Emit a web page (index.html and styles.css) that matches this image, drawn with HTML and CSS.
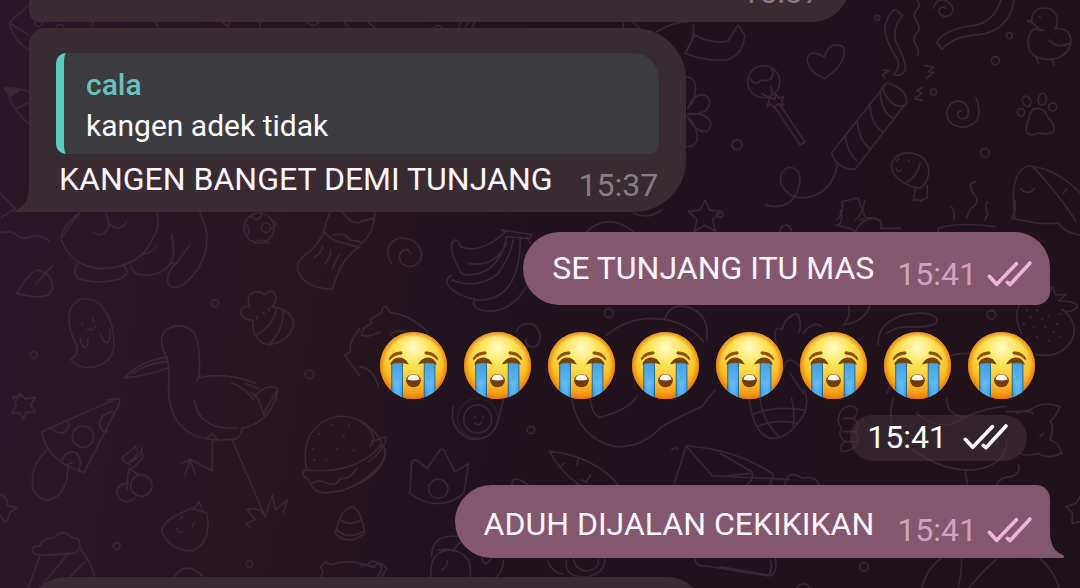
FILE: index.html
```
<!DOCTYPE html>
<html lang="id">
<head>
    <meta charset="UTF-8" />
    <meta name="viewport" content="width=device-width, initial-scale=1.0" />
    <title>Chat</title>
    <link rel="stylesheet" href="styles.css">
</head>
<body>

    <!-- Shared symbols -->
    <svg class="sprites" width="0" height="0" aria-hidden="true">
        <defs>
            <radialGradient id="skin" cx="50%" cy="24%" r="78%">
                <stop offset="0" stop-color="#fffbc9" />
                <stop offset=".3" stop-color="#fde55a" />
                <stop offset=".68" stop-color="#fbc02b" />
                <stop offset="1" stop-color="#ee8206" />
            </radialGradient>
            <radialGradient id="rim">
                <stop offset=".84" stop-color="#f08a08" stop-opacity="0" />
                <stop offset="1" stop-color="#e87806" stop-opacity=".85" />
            </radialGradient>
            <linearGradient id="tear" x1="0" y1="0" x2="0" y2="1">
                <stop offset="0" stop-color="#4a9fd9" />
                <stop offset=".5" stop-color="#5ab4ee" />
                <stop offset="1" stop-color="#269ae6" />
            </linearGradient>
            <clipPath id="face"><circle cx="100" cy="100" r="100" /></clipPath>
        </defs>
        <symbol id="sob" viewBox="0 0 200 200">
            <circle cx="100" cy="100" r="100" fill="url(#skin)" />
            <circle cx="100" cy="100" r="100" fill="url(#rim)" />
            <g clip-path="url(#face)">
                <path d="M35 92h32v110H35zM132 92h32v110h-32z" fill="url(#tear)" stroke="#28698f" stroke-width="3" />
                <path d="M43 150q8-12 16 0v50H43zM140 150q8-12 16 0v50h-16z" fill="#79c4f2" opacity=".45" />
            </g>
            <path d="M30 98Q38 76 57 76T86 97Q70 92 57 92T30 98zM113 97Q124 76 143 76T170 98Q157 92 143 92T113 97z" fill="#74420b" />
            <path d="M26 80Q38 56 65 58Q70 64 64 67Q43 68 29 84zM174 80Q162 56 135 58Q130 64 136 67Q157 68 171 84z" fill="#8b5208" />
            <ellipse cx="100" cy="145" rx="22" ry="20" fill="#743c0c" />
            <path d="M82 142Q84 127 100 127T118 142Q100 148 82 142z" fill="#fff8ef" />
        </symbol>
        <symbol id="ticks" viewBox="0 0 135 78">
            <path d="M7 46l22 24L88 8M61 64l8 7L129 6" fill="none" stroke="currentColor" stroke-width="11" stroke-linecap="round" stroke-linejoin="round" />
        </symbol>
    </svg>

    <!-- Wallpaper doodles -->
    <svg class="wallpaper" viewBox="0 0 1080 588" preserveAspectRatio="xMidYMid slice" aria-hidden="true">
        <g transform="scale(.33333)">
            <path d="M90 12L28 68Q40 125 88 150M28 70L88 105M20 265Q30 325 88 372M20 265Q50 262 88 275M50 325l38-18M0 580l45 45L5 652" />
            <path d="M12 264l50 3-30 22z" class="solid" />
            <circle cx="116" cy="68" r="12" /><circle cx="180" cy="82" r="9" />
            <path d="M272 80l8-12M465 68l10 14M670 68l14 14 4-16M780 68v14M925 68q12 18 30 0M1032 68l14 12M1105 68l20 16M1300 84q15-15 25 0M1375 84l8-16M1395 84l8-16M1415 84l8-16" />
        </g>
        <g transform="translate(360) scale(.33333)">
            <path d="M790 68v12M820 68l18 16M890 95q50-30 95-30M975 160q60 25 125 20 50-15 54-75l-20-30-30 48q-50 10-100-18zM1000 75q5 45-25 85" />
            <path d="M978 230q35 5 27 50-5 30-22 45Q1000 280 1035 285q25 15 5 45-20 15-58 12Q1040 335 1053 370q-5 35-35 20-20-10-36-40Q1015 380 1012 420q-8 22-34 20M820 640q45 20 85-10" />
            <path d="M1035 600l14 30 36 4-27 24 8 36-31-18-32 18 8-36-26-24 36-4z" />
        </g>
        <g transform="translate(720) scale(.33333)">
            <path d="M525 28l23 18q-30 35-22 75 35 70 30 90-15 22-36 12 25-20 10-50-48-70-30-110 5-20 25-35zM590 0q15 15 0 30t0 35 0 35-2 35 4 33M640 25q10-35 40-22 30 20 12 42-20 12-34-6-3-18 12-18l8 4" />
            <path d="M843 0q-25 75-95 78-70 10-98 48l16 22q35-40 110-44 90-10 106-104" />
            <path d="M936 70Q930 30 968 24q42-2 44 40 0 18-8 22 50-5 49 42-14 52-72 50-56-5-57-50 2-42 32-44-15-12-18-14zM936 62l-14 1 14 5M958 50l3 3M950 88q12 5 23 2M987 120q25 30 66 8M948 170l8 22M998 180l4 16" />
            <path d="M315 236q-48-18-54-58 6-33 52-7 16-52 57-30 14 45-55 95z" />
            <circle cx="131" cy="245" r="48" /><path d="M90 235q18 28 32 5 22 5 32-5 10-20 0-28M125 280l20 12M153 260l4 25M145 292l20 6 2-16 12 13 12-5-6 15 6 10-18-2-10 10-8-10-14 6 6-15zM162 318l78 116 15-8-77-115" />
            <path d="M500 249q60 15 60 58L405 508q-55 0-70-50zM490 255q-5 25 22 50t48 5M480 272q5 70 38 80M449 314q5 60 38 80M412 362q5 60 36 82M376 410q5 45 34 72M353 492q-15 85-90 100-50 10-78-35-12-38 18-54 35-5 37 40-12 90-102 73" />
            <path d="M490 210l18 2-20 12 8 12M615 196l25 5-14 14 14 2-20 18M608 262l-18 10 16 8-22 16 24 6" />
            <circle cx="826" cy="182" r="12" /><circle cx="868" cy="107" r="9" /><circle cx="641" cy="276" r="9" /><circle cx="795" cy="458" r="13" /><circle cx="51" cy="434" r="15" /><circle cx="472" cy="53" r="7" /><circle cx="0" cy="643" r="9" />
            <path d="M768 292q30 80-37 90-55-5-50-50 12-35 45-27 30 20 14 48-24 10-28-10 2-10 12-10" />
            <path d="M950 325q25 0 32 25 30 30 16 47-15 8-40 2-40 15-40-13 5-22 10-36 5-25 22-25z" /><ellipse cx="920" cy="304" rx="12" ry="16" transform="rotate(-25 920 304)" /><ellipse cx="967" cy="298" rx="12" ry="18" transform="rotate(10 967 298)" /><circle cx="998" cy="321" r="12" /><circle cx="903" cy="337" r="11" />
            <path d="M555 550q-45-25-40-60 15-32 50-32 60 5 62 60-5 30-24 45-20 5-48-13zM555 550q40-22 45-62M528 505q5 15 16 5M530 482l8-6M565 480l2 4M586 562l-6 40 12-3 10 5 8-6 12-4 0-38" />
            <path d="M885 658q-20-145 40-160 80 5 155 80M938 500q85 90 130 165M902 566q20 22 42 0M1030 580l10-14M768 545q-30 5-5 40 20 20-10 40l-15 30M693 620q14 10 8 40M803 605q-12 15 0 35l-8 20" />
            <path d="M350 660q24-25 16-55l20-5 28-6 6 15 14 40M420 660q25-15 60 0" />
        </g>
        <g transform="translate(0 200) scale(.33333)">
            <path d="M0 98q40-8 55 12 25 10 50-4 30 5 45 20M240 36q-65 55-55 85 30 80 120 85 120-5 155-95 22-30 10-75M190 108q20-35 52-72M318 40q20 45-10 62-18 5-28-5M326 70q30 30 54-5M235 190q-22 25 0 45 50 20 125 2 35-20 10-40M392 195q5 35 60 30 90-15 62-122M420 165q40-5 50-30M510 190h20q15-25 40-55M530 188q-35 35-25 65 20 25 60-12 70-70 52-160l-18-45" />
            <path d="M50 280q40-65 62-70 50 12 44 60-10 35-106 10zM108 252l50-55" />
            <path d="M212 478q30-15 15-48-30-60-15-105 30-50 85-15 50 50 44 135-10 50-72 58-40 0-57-25zM245 370l5 5M278 355l4 12M262 385q14 12 25-6M242 415q0 22 12 28 12-4 10-28M303 404q5 25 20 24 10-10 6-38" />
            <circle cx="645" cy="310" r="11" /><circle cx="101" cy="464" r="10" /><circle cx="928" cy="523" r="13" />
            <circle cx="777" cy="84" r="45" /><circle cx="798" cy="83" r="14" /><path d="M740 75q15 20 0 32M755 50q20 20 30-8M765 130q15-20 40 0M815 60l15 10-15 15" />
            <path d="M992 36q-15 25-20 60-20 40-45 60-45 30-32 58 20 50 102 54 20-60 30-75 20-30 50-52M975 98q15 20 50 30t55 15M1000 105q35-10 50 15l30 4M1028 36q20 35 52 32M968 140q-5 20-25 32M992 150q0 20-15 40M1018 165q-15 20-20 42" />
            <path d="M758 360q-38 0-35-30 8-14 25-10-12-40 22-45 18 0 22 10 25-25 36 5 0 20-12 30 60 10 65 50-10 55-75 64-50-10-48-74zM828 322q0 50-60 84M850 328q0 70-45 106M770 350l2 8M788 336l6 8M806 325l3 6" />
            <path d="M500 472q-28-50-5-80 50-35 90 10 18 40 12 132 70-20 170 15M500 472q-70 5-128 62 60-5 132-30M500 472q8 20 6 50v78M400 520q40-30 100-35M600 525q-8 10-8 18M695 548q40 15 65 50M735 550q25 10 40 15M765 590q30-40 68-25l-4 35M50 600l5-20 18 16 25-2M320 600l35-4M1080 385q-35 40-28 70l-18 10q20 30 45 62" />
        </g>
        <g transform="translate(0 390) scale(.33333)">
            <path d="M62 10l14 17 30-5-14 24 14 20-28 2-7 20-14-20-22 1 14-23-10-26 20 2z" />
            <path d="M352 25q12 0 4 20L252 248Q140 215 125 125zM155 115q15 18 40 12 15-15 10-30M338 65q-35 5-40 35 5 30 25 25M185 210q20-35 45-20 18 20 8 48M204 240q-5-25 14-20" /><circle cx="249" cy="140" r="32" /><path d="M140 180q-55 50-40 120 30 50 75 15 30-30 27-75" />
            <circle cx="424" cy="287" r="32" /><path d="M385 280q-35 0-35 30 15 40 54 15M380 300q5-60 8-65l30 22M390 225l-22-14q0-15 20-25 15-10 16-18l10 15q-5 20-28 35 35-10 40-45l2 30-20 22-20 15" />
            <path d="M505 0q5 120 105 145 60 10 100 0 15-10 16-30 90-20 107-115M583 32q15 90 130 82M755 8q25 15 35 65l40-70M620 145l15-15 15 15M637 148v94l-70-36M545 220l25-10-15 45M570 210l16 42M697 150l98 230q-10-30-55-22l25 30-28 15 15 10M795 380l22-65 10 45 36-32-14 40" />
            <path d="M575 355q-100 40-88 75 30 55 90 52 60-25 43-112zM580 358l18-22 12 30M548 380l-10 8M582 398l-6 12M530 415q5 15 16 10" />
            <path d="M1054 350q30 5 40 80-50 40-88 0 15-70 48-80zM1022 390q25 20 62 0M1010 420q35 30 78 5M920 240q-20-100 50-145 60-35 125 5 50 40 50 65-80 90-225 75zM920 240q-20 5-6 22 15 5 20 25 20 30 70 18 70-5 145-90 20-45-10-50M935 280q20-15 45 0 30 10 40-15 30 5 50-30M954 130l3 3M995 102l3 3M1045 105l3 3M938 175l3 3M1010 175l3 3M1060 180l3 3M978 210l3 3M942 208l3 3M1030 138l3 3" />
            <path d="M120 495q-25 0-22-22 12-8 22-4 5-25 40-25 25-30 55-2 30 0 24 32-10 20-30 16-50 5-89 5zM120 495l-35 99M205 490l-85 104M240 475q35 45 45 90M255 515l-45 45M0 312q25 10 22 35l30 5-22 15q-5 25-15 30L0 375" />
            <circle cx="350" cy="468" r="10" /><circle cx="748" cy="521" r="10" />
            <path d="M522 562q35-55 90 0M960 562q15-15 2-30 15-25 28-8 60-20 130 8 20-25 40 5l-15 25" />
        </g>
        <g transform="translate(360 200) scale(.33333)">
            <path d="M45 36q-5 70-45 97M95 192q-20-35-5-60 25-30 70-10 35 30 20 60-25 30-55 8-15-25 5-40 15-5 22 10M0 65l40-10" />
            <path d="M275 130q15-25 27 10 60 25 135-45l-12-5 90 14-8 12-67-6q-20 110-115 115-22 0-25-14-30-50-25-81zM325 190q80 15 115-60M275 225q-18 10-14 25 20 35 90 50 130 5 130-190M275 240q80 30 140-20 35-50 45-100M345 300q-15 15 15 30 90 20 145-80M500 110l12 20" />
            <path d="M680 95q65-60 140 0M60 395q-40 20-55 10 0-22 30-35l-5-12 35-20q5-40 25 0 60 5 115 60M90 405q25-25 60 0M470 395q10-30 50-22 35 30 10 65-30 10-32-20M0 500q40 5 55 60M740 405q60-50 140-50 100 5 150 70M915 355q15-45 65-35 70 20 60 100" /><circle cx="746" cy="339" r="13" />
        </g>
        <g transform="translate(360 390) scale(.33333)">
            <circle cx="353" cy="85" r="60" class="faint" /><circle cx="353" cy="87" r="42" /><path d="M280 50q-15 65 45 95 70 15 90-55l15-60M343 80l2 4M368 78l2 4M345 98q10 12 20 0" />
            <circle cx="513" cy="120" r="11" />
            <path d="M155 215q10-10 20 0l27 20 38-56q10-6 16 10l28 56 42-24-15 90q-75 60-162 0zM0 92q60 45 30 78M35 155l40-15q12 15-30 60l-20 15M75 180q0 60-75 100" /><circle cx="235" cy="296" r="29" />
            <path d="M775 285q-70-85-207-102 30 60 90 102M655 205l-4 20M612 220l-10 10M692 255l-14 22-15-8M455 285q0-35 50 0M635 25q20 120 130 145 80 5 140-60 70-40 120-60l40-50M690 20q5 55 30 62 80-20 110-60M935 180l14-8 5 8M978 168l80 90 230 10M978 170l-35 110M980 168q150 10 260 85-5 20-10 30" />
            <path d="M0 525q20 5 35-12 35 5 28 30l-12 18M215 500q0-70 80-60M275 480q-70 0-62 85M235 480q60-10 90 30 10 25 5 50M245 540q18-8 16-28M320 445q-35 20-40 40M430 510q0 35-20 50M365 505q10 30 28 0M565 515q10 30 42 38M620 510q-10 50 55 52 60-10 60-55M640 508q10 35 40 35 40-5 35-35M1005 500q-5 30 35 28l185 30q15-20 5-50" />
        </g>
        <g transform="translate(720 200) scale(.33333)">
            <path d="M135 15q50 15 80-15M362 30q10 45-15 45 50 10 60 20 15-40 60-40 25 10 15 30h60M655 85q60-20 170-5M655 85v12M885 0q5 35-10 55l80 15 60 0q20 30 65 35M405 60q20-10 30-60M180 95q0-20 22-20 15 10 10 20" />
            <path d="M385 315q10 35-15 60 65-10 80-60M170 440q-15-70 15-50 10-40 45-50 20 30 5 60M250 400q30-40 55-20M500 400q20-15 60-20 100 5 90-25-20-25-100-10-80 25-75 90M680 470q60-20 95 0M905 400q-30-60 0-95 50-30 70 0 0-20-12-35l24 10 10-20 10 25 30-2-20 20q60 0 55 20-30 20-45 5 50 40 30 90-35 60-110 45" />
            <path d="M920 330l3 3M950 330l3 3M985 345l3 3M910 370l3 3M940 380l3 3M975 380l3 3M1010 370l3 3M1020 410l3 3M950 410l3 3M985 420l3 3M930 350l3 3M965 355l3 3M1020 340l3 3M1000 395l3 3" /><circle cx="814" cy="344" r="13" /><path d="M190 510q10-60 60 0M210 520l40 60M500 580q20-40 40-80" />
        </g>
        <g transform="translate(720 390) scale(.33333)">
            <path d="M88 25q10 100 60 120 60 5 105-75 15-40 0-70M95 75q60-30 160-15M110 110q60-25 120-10M120 25q5 65 60 118M215 25q10 40 5 85" />
            <path d="M365 60q25-20 45-5 5 18-10 30 25 20 5 40 15 20 5 40-20 20-45 20-10-15 10-30-25-20-10-40-20-25 0-55zM370 85h30M370 125h38M375 155h30" />
            <path d="M520 25q-25 80 30 130 100 90 210 85 100-15 100-85M590 70q50 40 100 35 100-55 170-55M680 25q0 50 50 55M860 65q50 0 70-5 40-30 90-10-15 35-30 45 15 10 0 55 30 10 35 40-40 20-70 0-40 10-55 0M890 70q25-12 50 0M960 140l10-10M735 240l8 45M830 285q10-25 45-25 30-15 20-35M0 190l95 55q10 20-15 40M0 260l90-10M195 285q5-50 52-20 40-10 50 20" />
            <path d="M1080 320l-12 20-30 10 20 20-2 30 24-5M165 505q10 30-10 52L0 530M605 594q15-60 60-90M725 505q0 40-10 85M832 505q-60 55-85 89M960 505q40 35 58 89M230 594q20-25 40 0" /><circle cx="432" cy="530" r="13" />
        </g>
    </svg>

    <main class="chat">
        <article class="message incoming first">
            <span class="meta"><time>15:37</time></span>
        </article>

        <article class="message incoming reply tail-left">
            <blockquote class="quote">
                <cite class="quote-name">cala</cite>
                <p class="quote-text">kangen adek tidak</p>
            </blockquote>
            <div class="line">
                <p class="text">KANGEN BANGET DEMI TUNJANG</p>
                <span class="meta"><time>15:37</time></span>
            </div>
        </article>

        <article class="message outgoing">
            <p class="text">SE TUNJANG ITU MAS</p>
            <span class="meta"><time>15:41</time><svg class="ticks" role="img" aria-label="Dibaca"><use href="#ticks" /></svg></span>
        </article>

        <article class="emoji-message">
            <div class="emoji-row" role="img" aria-label="😭😭😭😭😭😭😭😭">
                <svg class="emoji"><use href="#sob" /></svg>
                <svg class="emoji"><use href="#sob" /></svg>
                <svg class="emoji"><use href="#sob" /></svg>
                <svg class="emoji"><use href="#sob" /></svg>
                <svg class="emoji"><use href="#sob" /></svg>
                <svg class="emoji"><use href="#sob" /></svg>
                <svg class="emoji"><use href="#sob" /></svg>
                <svg class="emoji"><use href="#sob" /></svg>
            </div>
            <span class="pill"><time>15:41</time><svg class="ticks" role="img" aria-label="Dibaca"><use href="#ticks" /></svg></span>
        </article>

        <article class="message outgoing tail-right">
            <p class="text">ADUH DIJALAN CEKIKIKAN</p>
            <span class="meta"><time>15:41</time><svg class="ticks" role="img" aria-label="Dibaca"><use href="#ticks" /></svg></span>
        </article>

        <article class="message incoming next"></article>
    </main>

</body>
</html>
```
FILE: styles.css
```
* {
    box-sizing: border-box;
}

body {
    margin: 0;
    height: 100vh;
    overflow: hidden;
    position: relative;
    background: linear-gradient(100deg, #291728 0%, #261620 28%, #20131d 48%, #1f121b 100%);
    color: #fff5fc;
    font-family: Roboto, sans-serif;
    font-size: 32px;
    line-height: 38px;
}

p {
    margin: 0;
}

.sprites {
    position: absolute;
}

.wallpaper {
    position: absolute;
    inset: 0;
    width: 100%;
    height: 100%;
    fill: none;
    stroke: #382733;
    stroke-width: 5;
    stroke-linecap: round;
    stroke-linejoin: round;
}

.wallpaper .solid {
    fill: #382733;
}

.wallpaper .faint {
    opacity: 0.5;
}

.chat {
    position: relative;
    display: flex;
    flex-direction: column;
    align-items: flex-start;
    height: 100vh;
    overflow: hidden;
    padding: 0 30px 0 29px;
}

.message {
    position: relative;
    display: flex;
    flex-shrink: 0;
    align-items: flex-end;
    gap: 23px;
    min-height: 73px;
    padding: 0 18px 12px 29px;
}

.text {
    padding-bottom: 6px;
}

.meta {
    display: flex;
    align-items: center;
    gap: 10px;
}

.incoming {
    background: #382b32;
    border-radius: 16px 52px 52px 16px;
}

.incoming .meta {
    color: #8b7a84;
}

/* scrolled partly out of view */
.first {
    justify-content: flex-end;
    width: 820px;
    margin-top: -51px;
    padding: 0 28px 11px 29px;
}

.reply {
    flex-direction: column;
    align-items: stretch;
    gap: 6px;
    margin-top: 6px;
    padding: 25px 27px 8px 27px;
    border-bottom-left-radius: 0;
}

.line {
    display: flex;
    align-items: flex-end;
    gap: 26px;
    padding: 0 1px 0 3px;
}

.quote {
    margin: 0;
    padding: 13px 22px 9px;
    border-left: 8px solid #5accc1;
    border-radius: 10px 26px 10px 10px;
    background: #3c3b40;
    font-size: 30px;
    color: #fff;
}

.quote-name {
    display: block;
    margin-bottom: 3px;
    color: #66c2bc;
    font-style: normal;
    font-weight: 500;
}

.outgoing {
    align-self: flex-end;
    margin-top: 20px;
    background: #83576e;
    border-radius: 37px 36px 14px 37px;
}

.outgoing .meta {
    color: #d3a1c0;
}

.ticks {
    width: 45px;
    height: 26px;
    color: #f0b3da;
}

/* bubble tails */
.tail-left::before,
.tail-right::after {
    content: "";
    position: absolute;
    bottom: 0;
    width: 16px;
    height: 24px;
}

.tail-left::before {
    left: -15px;
    background: #382b32;
    clip-path: path("M16 0H15Q14 18 1 22Q-1 24 3 24H16Z");
}

.tail-right::after {
    right: -15px;
    background: #83576e;
    clip-path: path("M0 0H1Q2 17 14 21Q17 24 13 24H0Z");
}

.tail-right {
    margin-top: 24px;
    padding-bottom: 9px;
    border-radius: 37px 14px 0 37px;
}

.emoji-message {
    align-self: flex-end;
    display: flex;
    flex-shrink: 0;
    flex-direction: column;
    align-items: flex-end;
    gap: 16px;
    margin-top: 27px;
}

.emoji-row {
    display: flex;
    gap: 17px;
    margin-right: 15px;
}

.emoji {
    width: 67px;
    height: 67px;
}

.pill {
    display: flex;
    align-items: center;
    gap: 16px;
    height: 46px;
    margin-right: 23px;
    padding: 0 19px 2px 17px;
    border-radius: 23px;
    background: rgba(70, 52, 64, 0.5);
    color: #fff;
}

.pill .ticks {
    color: #fff;
}

.next {
    width: 675px;
    margin-top: 19px;
    border-top-left-radius: 52px;
}
```
